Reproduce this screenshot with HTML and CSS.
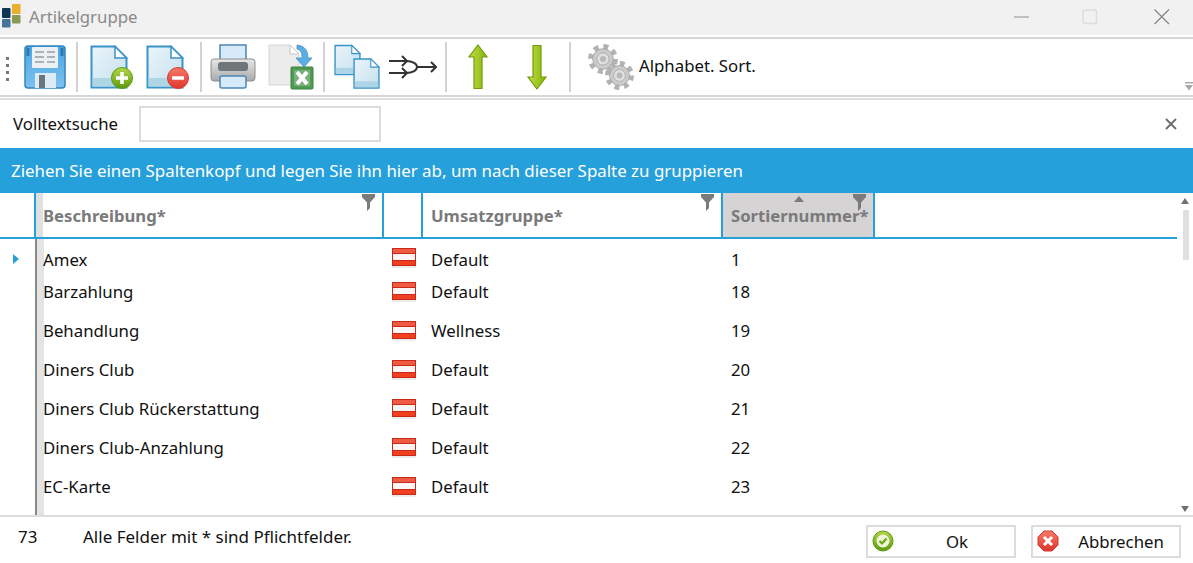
FILE: index.html
```html
<!DOCTYPE html>
<html lang="de">
<head>
<meta charset="utf-8">
<title>Artikelgruppe</title>
<link rel="stylesheet" href="styles.css">
</head>
<body>
<svg class="sprite" aria-hidden="true">
  <defs>
    <linearGradient id="docFill" x1="0" y1="0" x2="1" y2="1"><stop offset="0" stop-color="#eaf4fa"/><stop offset="1" stop-color="#c5e0ee"/></linearGradient>
    <linearGradient id="greenFill" x1="0" y1="0" x2="0" y2="1"><stop offset="0" stop-color="#b5d648"/><stop offset="1" stop-color="#5c9a0e"/></linearGradient>
    <linearGradient id="redFill" x1="0" y1="0" x2="0" y2="1"><stop offset="0" stop-color="#f47a6c"/><stop offset="1" stop-color="#e0362a"/></linearGradient>
    <linearGradient id="arrowFill" x1="0" y1="0" x2="1" y2="0"><stop offset="0" stop-color="#c4dd4c"/><stop offset="1" stop-color="#84b404"/></linearGradient>
    <linearGradient id="printFill" x1="0" y1="0" x2="0" y2="1"><stop offset="0" stop-color="#e8e8e8"/><stop offset="1" stop-color="#a8a8a8"/></linearGradient>
    <linearGradient id="saveFill" x1="0" y1="0" x2="0" y2="1"><stop offset="0" stop-color="#4ba5e2"/><stop offset="1" stop-color="#7cc2ee"/></linearGradient>
    <symbol id="doc" viewBox="0 0 38 44">
      <path d="M1.5 1.5H25L36.5 13V42.5H1.5Z" fill="url(#docFill)" stroke="#3a94c8" stroke-width="2"/>
      <rect x="2.5" y="33" width="33" height="8.5" fill="#aed5e6"/>
      <path d="M25 1.5V13H36.5Z" fill="#fff" stroke="#3a94c8" stroke-width="1.5"/>
    </symbol>
    <symbol id="gear" viewBox="0 0 32 32">
      <circle cx="16" cy="16" r="13" fill="none" stroke="#b2b2b2" stroke-width="6" stroke-dasharray="5.2 5"/>
      <circle cx="16" cy="16" r="11" fill="#cbcbcb" stroke="#a6a6a6"/>
      <circle cx="16" cy="16" r="6.5" fill="#e0e0e0" stroke="#adadad"/>
      <circle cx="16" cy="16" r="3.2" fill="#b8b8b8"/>
    </symbol>
    <symbol id="funnel" viewBox="0 0 13 17">
      <path d="M0 0H13V3L8 8.500V14L5 17V8.500L0 3Z" fill="#7b7b7b"/>
    </symbol>
    <symbol id="flag" viewBox="0 0 24 20">
      <rect width="24" height="19" fill="#c8c8c8" opacity=".35" y="1"/>
      <rect width="24" height="18" fill="#c92a18"/>
      <rect x="1" y="1" width="22" height="4" fill="#ef5a44"/>
      <rect x="1" y="6" width="22" height="6" fill="#fbf6f5"/>
      <rect x="1" y="13" width="22" height="4" fill="#f0401f"/>
    </symbol>
  </defs>
</svg>

<div class="window">
  <header class="titlebar">
    <svg class="app-icon" width="20" height="25" viewBox="0 0 20 25"><rect x="0" y="4" width="8.500" height="10" rx="1" fill="#0e3458"/><rect x="10" y="0" width="8.500" height="10" rx="1" fill="#e8ae2c"/><rect x="0" y="15" width="8.500" height="8.500" rx="1" fill="#46739a"/><rect x="10" y="11" width="8.500" height="8.500" rx="1" fill="#8b9a50"/></svg>
    <span class="window-title">Artikelgruppe</span>
    <div class="window-controls">
      <svg width="16" height="16" viewBox="0 0 16 16"><path d="M0 8H15" stroke="#8c8c8c" stroke-width="1"/></svg>
      <svg class="ctl-max" width="16" height="16" viewBox="0 0 16 16"><rect x="1" y="1" width="13.500" height="13.500" rx="1.500" fill="none" stroke="#dcdcdc" stroke-width="1.500"/></svg>
      <svg class="ctl-close" width="16" height="16" viewBox="0 0 16 16"><path d="M.5.5L15 15M15 .5L.5 15" stroke="#808080" stroke-width="1.100"/></svg>
    </div>
  </header>

  <nav class="toolbar">
    <div class="grip"><i></i><i></i><i></i><i></i></div>
    <svg class="tool t-save" width="42" height="44" viewBox="0 0 42 44">
      <rect x="1" y="1" width="40" height="42" rx="3" fill="url(#saveFill)" stroke="#2f86c0" stroke-width="1.500"/>
      <rect x="2.500" y="3" width="3" height="8" fill="#2f78b0"/>
      <rect x="36.500" y="3" width="3" height="8" fill="#2f78b0"/>
      <rect x="8" y="2" width="26" height="21" rx="1" fill="#eef1f3"/>
      <path d="M11 7h9M23 7h8M11 12h9M23 12h8M11 17h9M23 17h8" stroke="#969fa5" stroke-width="1.500"/>
      <rect x="11" y="28" width="21" height="15" fill="#dcebf6"/>
      <rect x="15" y="30" width="6" height="13" fill="#6a757c"/>
    </svg>
    <div class="sep s-1"></div>
    <svg class="tool t-add" width="44" height="44" viewBox="0 0 44 44">
      <use href="#doc" width="38" height="44"/>
      <circle cx="32" cy="33" r="10.500" fill="url(#greenFill)" stroke="#5c9a0e"/>
      <path d="M32 27V39M26 33H38" stroke="#fff" stroke-width="3.500"/>
    </svg>
    <svg class="tool t-del" width="44" height="44" viewBox="0 0 44 44">
      <use href="#doc" width="38" height="44"/>
      <circle cx="32" cy="33" r="10.500" fill="url(#redFill)" stroke="#d43c30"/>
      <path d="M26 33H38" stroke="#fff" stroke-width="3.500"/>
    </svg>
    <div class="sep s-2"></div>
    <svg class="tool t-print" width="46" height="46" viewBox="0 0 46 46">
      <rect x="10" y="1" width="26" height="20" fill="#d6eafa" stroke="#4b86b8" stroke-width="1.500"/>
      <rect x="1" y="15" width="44" height="22" rx="3" fill="url(#printFill)" stroke="#8e8e8e"/>
      <rect x="8" y="18" width="30" height="9" rx="3" fill="#70757a"/>
      <rect x="10" y="32" width="26" height="12" rx="2" fill="#d6eafa" stroke="#4b86b8" stroke-width="1.500"/>
    </svg>
    <svg class="tool t-excel" width="46" height="46" viewBox="0 0 46 46">
      <path d="M1 1H22L31 10V41H1Z" fill="#ececec" stroke="#d4d4d4"/>
      <path d="M22 1V10H31Z" fill="#fff" stroke="#c4c4c4"/>
      <path d="M29 1C38 2 40 8 40 14H44L36 23L28 14H34C34 9 33 6 29 5Z" fill="#5aaee4" stroke="#4a90c4" stroke-width=".8"/>
      <rect x="23" y="23" width="22" height="22" rx="1" fill="#4e9a52" stroke="#3f8444"/>
      <rect x="26" y="26" width="16" height="16" fill="#7ab07c"/>
      <path d="M29 28L39 40M39 28L29 40" stroke="#fff" stroke-width="4"/>
    </svg>
    <div class="sep s-3"></div>
    <svg class="tool t-copy" width="46" height="46" viewBox="0 0 46 46">
      <use href="#doc" width="27" height="32"/>
      <use href="#doc" x="19" y="13" width="27" height="33"/>
    </svg>
    <svg class="tool t-merge" width="48" height="24" viewBox="0 0 48 24" fill="none" stroke="#333" stroke-width="2">
      <path d="M0 6H17C24 6 28 9 28 12C28 15 24 18 17 18H0"/>
      <path d="M28 12H47"/>
      <path d="M13 1L18 6L13 11M13 13L18 18L13 23M42 7L47 12L42 17"/>
    </svg>
    <div class="sep s-4"></div>
    <svg class="tool t-up" width="20" height="46" viewBox="0 0 20 46">
      <path d="M10 1L19 13H14V44.500H6V13H1Z" fill="url(#arrowFill)" stroke="#6f9e0a" stroke-width="1.200"/>
    </svg>
    <svg class="tool t-down" width="20" height="46" viewBox="0 0 20 46">
      <path d="M10 45L19 33H14V1.500H6V33H1Z" fill="url(#arrowFill)" stroke="#6f9e0a" stroke-width="1.200"/>
    </svg>
    <div class="sep s-5"></div>
    <svg class="tool t-gears" width="46" height="46" viewBox="0 0 46 46">
      <use href="#gear" width="30" height="30"/>
      <use href="#gear" x="17" y="17" width="29" height="29"/>
    </svg>
    <span class="tool-label">Alphabet. Sort.</span>
    <svg class="overflow" width="8" height="9" viewBox="0 0 8 9"><path d="M0 0H8V1.500H0ZM0 3H8L4 8.500Z" fill="#a8a8a8"/></svg>
  </nav>

  <section class="search">
    <label class="search-label" for="q">Volltextsuche</label>
    <input id="q" class="search-input" type="text">
    <svg class="search-close" width="12" height="12" viewBox="0 0 12 12"><path d="M1 1L11 11M11 1L1 11" stroke="#707070" stroke-width="2"/></svg>
  </section>

  <div class="groupbar">Ziehen Sie einen Spaltenkopf und legen Sie ihn hier ab, um nach dieser Spalte zu gruppieren</div>

  <div class="grid-wrap">
    <div class="grid">
      <div class="head">
        <div class="hc hc-ind"></div>
        <div class="hc hc-name">Beschreibung*<svg class="funnel" width="13" height="17"><use href="#funnel"/></svg></div>
        <div class="hc hc-flag"></div>
        <div class="hc hc-group">Umsatzgruppe*<svg class="funnel" width="13" height="17"><use href="#funnel"/></svg></div>
        <div class="hc hc-sort">Sortiernummer*<span class="sort-up"></span><svg class="funnel" width="13" height="17"><use href="#funnel"/></svg></div>
      </div>
      <div class="rows">
        <div class="row first"><div class="c-ind"><span class="current"></span></div><div class="c-name">Amex</div><div class="c-flag"><svg width="24" height="20"><use href="#flag"/></svg></div><div class="c-group">Default</div><div class="c-num">1</div></div>
        <div class="row"><div class="c-ind"></div><div class="c-name">Barzahlung</div><div class="c-flag"><svg width="24" height="20"><use href="#flag"/></svg></div><div class="c-group">Default</div><div class="c-num">18</div></div>
        <div class="row"><div class="c-ind"></div><div class="c-name">Behandlung</div><div class="c-flag"><svg width="24" height="20"><use href="#flag"/></svg></div><div class="c-group">Wellness</div><div class="c-num">19</div></div>
        <div class="row"><div class="c-ind"></div><div class="c-name">Diners Club</div><div class="c-flag"><svg width="24" height="20"><use href="#flag"/></svg></div><div class="c-group">Default</div><div class="c-num">20</div></div>
        <div class="row"><div class="c-ind"></div><div class="c-name">Diners Club Rückerstattung</div><div class="c-flag"><svg width="24" height="20"><use href="#flag"/></svg></div><div class="c-group">Default</div><div class="c-num">21</div></div>
        <div class="row"><div class="c-ind"></div><div class="c-name">Diners Club-Anzahlung</div><div class="c-flag"><svg width="24" height="20"><use href="#flag"/></svg></div><div class="c-group">Default</div><div class="c-num">22</div></div>
        <div class="row"><div class="c-ind"></div><div class="c-name">EC-Karte</div><div class="c-flag"><svg width="24" height="20"><use href="#flag"/></svg></div><div class="c-group">Default</div><div class="c-num">23</div></div>
        <div class="row"><div class="c-ind"></div><div class="c-name"></div><div class="c-flag"><svg width="24" height="20"><use href="#flag"/></svg></div><div class="c-group"></div><div class="c-num"></div></div>
      </div>
    </div>
    <div class="scrollbar">
      <span class="arrow-up"></span>
      <span class="thumb"></span>
      <span class="arrow-down"></span>
    </div>
  </div>

  <footer class="footer">
    <span class="count">73</span>
    <span class="note">Alle Felder mit * sind Pflichtfelder.</span>
    <button class="btn btn-ok" type="button">
      <svg width="22" height="22" viewBox="0 0 22 22"><circle cx="11" cy="11" r="10" fill="url(#greenFill)" stroke="#5c9a0e"/><circle cx="11" cy="11" r="6.500" fill="#eef6da"/><path d="M7.500 11L10 13.500L14.500 8.500" fill="none" stroke="#6ba814" stroke-width="2.200"/></svg>
      <span class="btn-text">Ok</span>
    </button>
    <button class="btn btn-cancel" type="button">
      <svg width="22" height="22" viewBox="0 0 22 22"><path d="M7 1H15L21 7V15L15 21H7L1 15V7Z" fill="url(#redFill)" stroke="#d43c30"/><path d="M7 7L15 15M15 7L7 15" stroke="#fff" stroke-width="3"/></svg>
      <span class="btn-text">Abbrechen</span>
    </button>
  </footer>
</div>
</body>
</html>
```

FILE: styles.css
```css
* { box-sizing: border-box; }
html, body { margin: 0; padding: 0; height: 100%; background: #fff; overflow: hidden; }
body { font-family: "Noto Sans", "Open Sans", sans-serif; font-size: 16.8px; color: #111; }
.sprite { display: block; width: 0; height: 0; }
.window { display: flex; flex-direction: column; width: 1193px; height: 563px; }

.titlebar { flex: 0 0 35px; display: flex; align-items: center; background: #f1f1f1; padding-left: 2px; margin-bottom: 2px; }
.app-icon { flex: none; margin-top: -2px; }
.window-title { margin-left: 7px; margin-top: -2px; font-size: 16.8px; color: #8a8a8a; }
.window-controls { margin-left: auto; display: flex; padding-right: 23px; margin-top: -2px; }
.ctl-max { margin-left: 52px; }
.ctl-close { margin-left: 56px; }

.toolbar { flex: 0 0 60px; display: flex; align-items: center; border-top: 2px solid #d6d6d6; border-bottom: 2px solid #d6d6d6; position: relative; padding-left: 6px; }
.grip { display: flex; flex-direction: column; gap: 4px; width: 3px; margin-top: 3px; }
.grip i { display: block; width: 3px; height: 3px; background: #777; }
.tool { flex: none; display: block; }
.sep { flex: none; width: 2px; height: 50px; background: #d2d2d2; }
.t-save { margin-left: 15px; }
.s-1 { margin-left: 10px; }
.t-add { margin-left: 12px; }
.t-del { margin-left: 12px; }
.s-2 { margin-left: 10px; }
.t-print { margin-left: 8px; }
.t-excel { margin-left: 12px; }
.s-3 { margin-left: 9px; }
.t-copy { margin-left: 9px; }
.t-merge { margin-left: 9px; }
.s-4 { margin-left: 8px; }
.t-up { margin-left: 21px; }
.t-down { margin-left: 39px; }
.s-5 { margin-left: 22px; }
.t-gears { margin-left: 17px; }
.tool-label { margin-left: 5px; margin-top: -4px; color: #111; }
.overflow { position: absolute; right: 0; bottom: 4px; }

.search { flex: 0 0 50px; display: flex; align-items: center; border-top: 2px solid #dedede; margin-top: 1px; padding: 0 16px 1px 13px; }
.search-label { width: 126px; }
.search-input { width: 242px; height: 36px; border: 2px solid #dcdcdc; background: #fff; outline: none; }
.search-close { margin-left: auto; }

.groupbar { flex: 0 0 45px; display: flex; align-items: center; padding: 0 0 1px 11px; background: #26a0da; color: #fff; font-size: 16.9px; }

.grid-wrap { flex: 0 0 324px; display: flex; border-bottom: 2px solid #dcdcdc; overflow: hidden; }
.grid { flex: 0 0 1177px; display: flex; flex-direction: column; overflow: hidden; }
.head { flex: 0 0 46px; display: grid; grid-template-columns: 36px 348px 39px 300px 152px; border-bottom: 2px solid #26a0da; }
.hc { position: relative; display: flex; align-items: center; padding: 0 0 0 8px; font-weight: 700; color: #7a7a7a; font-size: 16.7px; border-right: 2px solid #26a0da; white-space: nowrap; }
.hc-ind { padding: 0; }
.hc-name { border-left: 7px solid #e0e0e0; padding-left: 0; }
.hc-sort { background: #d5d3d3; }
.funnel { position: absolute; top: 1px; right: 7px; }
.sort-up { position: absolute; top: 3px; left: 71px; width: 0; height: 0; border-left: 5px solid transparent; border-right: 5px solid transparent; border-bottom: 6px solid #7b7b7b; }

.rows { flex: 1; overflow: hidden; }
.row { height: 39px; display: grid; grid-template-columns: 35px 349px 39px 300px 1fr; align-items: stretch; }
.row > div { display: flex; align-items: center; }
.row.first { height: 33px; }
.row.first > div { padding-top: 7px; }
.row.first > .c-flag { padding-top: 5px; }
.c-ind { justify-content: center; padding-right: 4px; }
.current { width: 0; height: 0; border-top: 5px solid transparent; border-bottom: 5px solid transparent; border-left: 6px solid #26a0da; }
.c-name { border-left: 2px solid #8a8a8a; box-shadow: inset 7px 0 0 #e4e4e4; padding-left: 6px; white-space: nowrap; }
.c-flag { padding-left: 8px; }
.c-group { padding-left: 8px; }
.c-num { padding-left: 8px; }

.scrollbar { flex: 1; position: relative; background: #fff; }
.arrow-up, .arrow-down { position: absolute; left: 4px; width: 0; height: 0; border-left: 4px solid transparent; border-right: 4px solid transparent; }
.arrow-up { top: 5px; border-bottom: 6px solid #707070; }
.arrow-down { bottom: 3px; border-top: 6px solid #707070; }
.thumb { position: absolute; top: 17px; left: 6px; width: 6px; height: 50px; background: #e0e0e0; }

.footer { flex: 1; display: flex; align-items: center; position: relative; padding-right: 12px; }
.count { margin-left: 18px; width: 65px; margin-top: -7px; font-size: 17px; }
.note { flex: 1; margin-top: -7px; font-size: 17px; }
.btn { display: flex; align-items: center; width: 150px; height: 33px; padding: 0 0 0 4px; margin-left: 15px; margin-top: 2px; background: #fff; border: 2px solid #dcdcdc; font: inherit; color: #111; }
.btn-text { flex: 1; text-align: center; }
.btn-ok .btn-text { padding-left: 6px; }
.btn-cancel .btn-text { padding-left: 4px; }
```
